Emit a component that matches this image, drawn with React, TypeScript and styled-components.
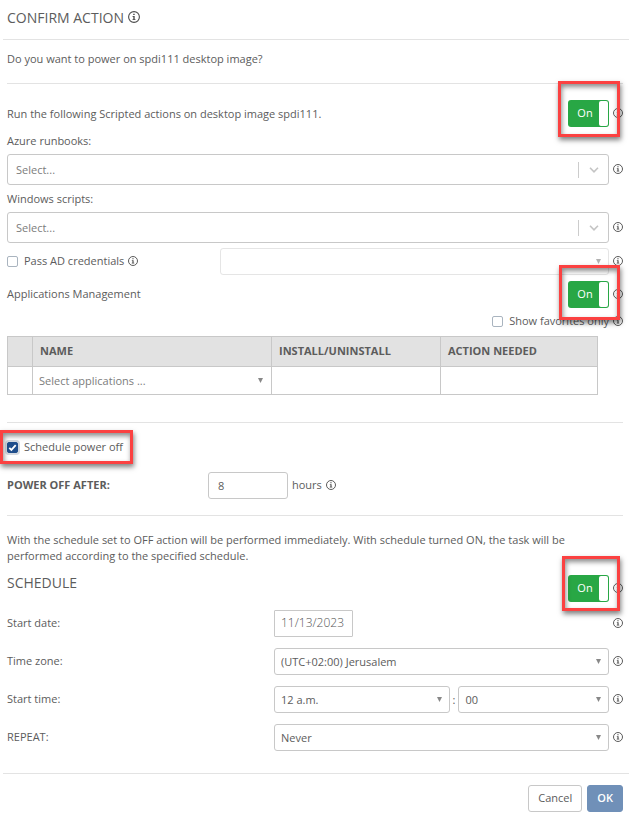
import React, { useId, useState } from "react";
import styled, { createGlobalStyle, css } from "styled-components";

const GlobalStyle = createGlobalStyle`
  *, *::before, *::after { box-sizing: border-box; }
  body {
    margin: 0;
    background: #fff;
    color: #5c5c5c;
    font: 11px/16px "Open Sans", sans-serif;
    overflow-x: hidden;
  }
  button, input, select { font: inherit; color: inherit; margin: 0; }
`;

const Dialog = styled.main`
  padding-left: 3px;
`;

const Header = styled.header`
  display: flex;
  align-items: center;
  gap: 4px;
  height: 40px;
  padding: 0 4px 4px;
  border-bottom: 1px solid #e3e3e3;
`;

const Title = styled.h1`
  margin: 0;
  font-size: 14px;
  line-height: 20px;
  font-weight: 400;
`;

const Body = styled.form`
  padding: 11px 6px 22px 4px;
`;

const Text = styled.p`
  margin: 0;
`;

const Rule = styled.hr<{ $top?: number }>`
  height: 1px;
  margin: ${(p) => p.$top ?? 16}px 0 16px;
  border: 0;
  background: #e3e3e3;
`;

/* A control area with a trailing info icon. */
const Row = styled.div<{ $top?: number }>`
  display: grid;
  grid-template-columns: minmax(0, 1fr) 10px;
  align-items: center;
  column-gap: 4px;
  margin-top: ${(p) => p.$top ?? 0}px;
`;

const Split = styled.div<{ $start?: boolean }>`
  display: flex;
  justify-content: space-between;
  align-items: ${(p) => (p.$start ? "flex-start" : "center")};
`;

const SectionTitle = styled.h2`
  margin: 0;
  font-size: 14px;
  line-height: 16px;
  font-weight: 400;
`;

const FieldLabel = styled.label`
  display: block;
  margin: 6px 0 5px;
`;

const RowLabel = styled.label<{ $strong?: boolean }>`
  padding-bottom: 1px;
  font-weight: ${(p) => (p.$strong ? 700 : 400)};
`;

const highlight = css`
  content: "";
  position: absolute;
  border: 3px solid #fb4141;
  box-shadow: 1px 3px 5px rgba(0, 0, 0, 0.5), inset 1px 3px 5px rgba(0, 0, 0, 0.45);
  pointer-events: none;
  z-index: 2;
`;

const ToggleMark = styled.span<{ $top: number; $left: number; $bottom: number }>`
  position: relative;
  display: inline-flex;
  &::after {
    ${highlight}
    top: -${(p) => p.$top}px;
    left: -${(p) => p.$left}px;
    right: -11px;
    bottom: -${(p) => p.$bottom}px;
  }
`;

const CheckMarked = styled.span`
  position: relative;
  display: inline-flex;
  &::after {
    ${highlight}
    inset: -9px -10px -9px -7px;
  }
`;

const Switch = styled.button<{ $on: boolean }>`
  display: flex;
  flex-direction: ${(p) => (p.$on ? "row" : "row-reverse")};
  align-items: stretch;
  width: 41px;
  height: 27px;
  padding: 1px;
  border: 0;
  border-radius: 3px;
  background: ${(p) => (p.$on ? "#28a745" : "#999")};
  color: #fff;
  line-height: 24px;
  cursor: pointer;
`;

const SwitchText = styled.span`
  flex: 1;
  padding-left: 2px;
  text-align: center;
`;

const SwitchKnob = styled.span`
  width: 9px;
  border-radius: 2px;
  background: #fff;
`;

const SelectBox = styled.span<{ $grow?: number; $dim?: boolean }>`
  position: relative;
  display: block;
  flex: ${(p) => p.$grow ?? 1} 1 0;
  min-width: 0;
  opacity: ${(p) => (p.$dim ? 0.65 : 1)};
`;

const SelectControl = styled.select<{ $large?: boolean; $bare?: boolean }>`
  appearance: none;
  display: block;
  width: 100%;
  height: ${(p) => (p.$large ? 31 : 27)}px;
  padding: ${(p) => (p.$large ? "0 40px 0 8px" : "0 20px 0 6px")};
  border: ${(p) => (p.$bare ? "0" : "1px solid #c8c8c8")};
  border-radius: 3px;
  background: transparent;
  color: ${(p) => (p.$large || p.$bare ? "#7c7c7c" : "#5c5c5c")};
`;

const Arrow = styled.svg`
  position: absolute;
  top: 50%;
  right: 8px;
  width: 5px;
  height: 5px;
  margin-top: -3px;
  pointer-events: none;
  fill: #888;
`;

const ChevronCell = styled.span`
  position: absolute;
  top: 8px;
  bottom: 7px;
  right: 1px;
  display: flex;
  align-items: center;
  justify-content: center;
  width: 30px;
  border-left: 1px solid #ccc;
  pointer-events: none;
`;

const Check = styled.label`
  display: inline-flex;
  align-items: center;
  gap: 6px;
`;

const CheckInput = styled.input`
  appearance: none;
  width: 11px;
  height: 11px;
  border: 1px solid #a9b4bf;
  border-radius: 2px;
  background: #fff;
  &:checked {
    border-color: #1f4e8c;
    background: #1f4e8c
      url("data:image/svg+xml,%3Csvg xmlns='http://www.w3.org/2000/svg' viewBox='0 0 9 9'%3E%3Cpath d='M1.3 4.8 3.4 6.9 7.7 2.2' fill='none' stroke='white' stroke-width='1.8'/%3E%3C/svg%3E")
      center / 9px 9px no-repeat;
    box-shadow: 0 0 0 2px #d5dae0;
  }
`;

const Credentials = styled.div`
  display: grid;
  grid-template-columns: 213px minmax(0, 1fr);
  align-items: center;
`;

const Inline = styled.div`
  display: flex;
  align-items: center;
  gap: 4px;
`;

const CheckLine = styled(Inline)`
  padding-bottom: 1px;
`;

const TimeLine = styled(Inline)`
  gap: 3px;
`;

const Favorites = styled(Row)`
  justify-items: end;
`;

const TableWrap = styled.div`
  margin: 7px 25px 0 0;
`;

const AppTable = styled.table`
  width: 100%;
  table-layout: fixed;
  border-collapse: collapse;
  th, td {
    border: 1px solid #c8c8c8;
    text-align: left;
  }
  th {
    height: 30px;
    padding: 0 7px 1px;
    background: #e2e2e2;
    font-weight: 700;
  }
  td {
    height: 28px;
    padding: 0;
  }
`;

const Col = styled.col<{ $w: string }>`
  width: ${(p) => p.$w};
`;

const PowerOff = styled.div`
  display: grid;
  grid-template-columns: 201px minmax(0, 1fr);
  align-items: center;
  margin-top: 17px;
`;

const Unit = styled.span`
  padding-bottom: 1px;
`;

const TextInput = styled.input<{ $date?: boolean }>`
  width: ${(p) => (p.$date ? 79 : 80)}px;
  height: 27px;
  padding: ${(p) => (p.$date ? "0 6px 2px" : "0 9px")};
  border: 1px solid #c8c8c8;
  border-radius: ${(p) => (p.$date ? 1 : 3)}px;
  background: #fff;
  ${(p) => p.$date && "font-size: 12px; font-weight: 300; color: #555;"}
`;

const Fields = styled.div`
  display: grid;
  gap: 11px;
  margin-top: 8px;
`;

const Field = styled.div`
  display: grid;
  grid-template-columns: 267px minmax(0, 1fr);
  align-items: center;
`;

const Footer = styled.footer`
  display: flex;
  justify-content: flex-end;
  gap: 5px;
  padding: 11px 6px 4px;
  border-top: 1px solid #e3e3e3;
`;

const Button = styled.button<{ $primary?: boolean }>`
  height: 27px;
  padding: 0 9px 1px;
  border: 1px solid ${(p) => (p.$primary ? "#7090b8" : "#c8c8c8")};
  border-radius: 3px;
  background: ${(p) => (p.$primary ? "#7090b8" : "#fff")};
  color: ${(p) => (p.$primary ? "#fff" : "#5c5c5c")};
  font-weight: ${(p) => (p.$primary ? 600 : 400)};
`;

const InfoSvg = styled.svg`
  display: block;
  flex: none;
  margin-bottom: 1px;
`;

function Info({ size = 10 }: { size?: number }) {
  return (
    <InfoSvg width={size} height={size} viewBox="0 0 12 12" role="img" aria-label="Info">
      <circle cx="6" cy="6" r="5.4" fill="none" stroke="#4c4c4c" strokeWidth="1.1" />
      <path d="M5.2 2.7h1.5v1.3H5.2zM4.6 5h2.1v3.2h.8v.9H4.5v-.9h.8V5.9h-.7z" fill="#4c4c4c" />
    </InfoSvg>
  );
}

function Toggle({ label }: { label: string }) {
  const [on, setOn] = useState(true);
  return (
    <Switch type="button" role="switch" aria-checked={on} aria-label={label} $on={on} onClick={() => setOn(!on)}>
      <SwitchText>{on ? "On" : "Off"}</SwitchText>
      <SwitchKnob />
    </Switch>
  );
}

interface DropProps {
  value: string;
  id?: string;
  label?: string;
  grow?: number;
  dim?: boolean;
  bare?: boolean;
}

function Drop({ value, id, label, grow, dim, bare }: DropProps) {
  return (
    <SelectBox $grow={grow} $dim={dim}>
      <SelectControl id={id} aria-label={label} disabled={dim} $bare={bare}>
        <option>{value}</option>
      </SelectControl>
      <Arrow viewBox="0 0 5 5">
        <path d="M0 0h5L2.5 5z" />
      </Arrow>
    </SelectBox>
  );
}

function ScriptPicker({ label }: { label: string }) {
  const id = useId();
  return (
    <>
      <FieldLabel htmlFor={id}>{label}</FieldLabel>
      <Row>
        <SelectBox>
          <SelectControl id={id} $large>
            <option>Select...</option>
          </SelectControl>
          <ChevronCell>
            <svg width="10" height="6" viewBox="0 0 10 6" fill="none" stroke="#c4c4c4" strokeWidth="1.6">
              <path d="M1 .8 5 4.8 9 .8" />
            </svg>
          </ChevronCell>
        </SelectBox>
        <Info />
      </Row>
    </>
  );
}

export default function App() {
  return (
    <>
      <GlobalStyle />
      <Dialog>
        <Header>
          <Title>CONFIRM ACTION</Title>
          <Info size={12} />
        </Header>
        <Body id="confirm" onSubmit={(e) => e.preventDefault()}>
          <Text>Do you want to power on spdi111 desktop image?</Text>
          <Rule />
          <Row>
            <Split>
              <Text>Run the following Scripted actions on desktop image spdi111.</Text>
              <ToggleMark $top={19} $left={10} $bottom={10}>
                <Toggle label="Scripted actions" />
              </ToggleMark>
            </Split>
            <Info />
          </Row>
          <ScriptPicker label="Azure runbooks:" />
          <ScriptPicker label="Windows scripts:" />
          <Row $top={5}>
            <Credentials>
              <CheckLine>
                <Check>
                  <CheckInput type="checkbox" />
                  Pass AD credentials
                </Check>
                <Info />
              </CheckLine>
              <Drop value="" label="AD credentials" dim />
            </Credentials>
            <Info />
          </Row>
          <Row $top={6}>
            <Split>
              <Unit>Applications Management</Unit>
              <ToggleMark $top={16} $left={9} $bottom={12}>
                <Toggle label="Applications Management" />
              </ToggleMark>
            </Split>
            <Info />
          </Row>
          <Favorites $top={5}>
            <Check>
              <CheckInput type="checkbox" />
              Show favorites only
            </Check>
            <Info />
          </Favorites>
          <TableWrap>
            <AppTable>
              <colgroup>
                <Col $w="25px" />
                <Col $w="239px" />
                <Col $w="169px" />
                <Col $w="auto" />
              </colgroup>
              <thead>
                <tr>
                  <th aria-label="Selection" />
                  <th>NAME</th>
                  <th>INSTALL/UNINSTALL</th>
                  <th>ACTION NEEDED</th>
                </tr>
              </thead>
              <tbody>
                <tr>
                  <td />
                  <td>
                    <Drop value="Select applications ..." label="Applications" bare />
                  </td>
                  <td />
                  <td />
                </tr>
              </tbody>
            </AppTable>
          </TableWrap>
          <Rule $top={27} />
          <Inline>
            <CheckMarked>
              <Check>
                <CheckInput type="checkbox" defaultChecked />
                Schedule power off
              </Check>
            </CheckMarked>
          </Inline>
          <PowerOff>
            <RowLabel htmlFor="hours" $strong>
              POWER OFF AFTER:
            </RowLabel>
            <Inline>
              <TextInput id="hours" defaultValue="8" />
              <Unit>hours</Unit>
              <Info />
            </Inline>
          </PowerOff>
          <Rule />
          <Text>
            With the schedule set to OFF action will be performed immediately. With schedule turned ON, the task will be
            performed according to the specified schedule.
          </Text>
          <Row $top={11}>
            <Split $start>
              <SectionTitle>SCHEDULE</SectionTitle>
              <ToggleMark $top={19} $left={6} $bottom={9}>
                <Toggle label="Schedule" />
              </ToggleMark>
            </Split>
            <Info />
          </Row>
          <Fields>
            <Row>
              <Field>
                <RowLabel htmlFor="date">Start date:</RowLabel>
                <TextInput id="date" defaultValue="11/13/2023" $date />
              </Field>
              <Info />
            </Row>
            <Row>
              <Field>
                <RowLabel htmlFor="zone">Time zone:</RowLabel>
                <Drop id="zone" value="(UTC+02:00) Jerusalem" />
              </Field>
              <Info />
            </Row>
            <Row>
              <Field>
                <RowLabel htmlFor="hour">Start time:</RowLabel>
                <TimeLine>
                  <Drop id="hour" value="12 a.m." grow={7} />
                  <span>:</span>
                  <Drop label="Minutes" value="00" grow={6} />
                </TimeLine>
              </Field>
              <Info />
            </Row>
            <Row>
              <Field>
                <RowLabel htmlFor="repeat">REPEAT:</RowLabel>
                <Drop id="repeat" value="Never" />
              </Field>
              <Info />
            </Row>
          </Fields>
        </Body>
        <Footer>
          <Button type="button">Cancel</Button>
          <Button type="submit" form="confirm" $primary>
            OK
          </Button>
        </Footer>
      </Dialog>
    </>
  );
}
